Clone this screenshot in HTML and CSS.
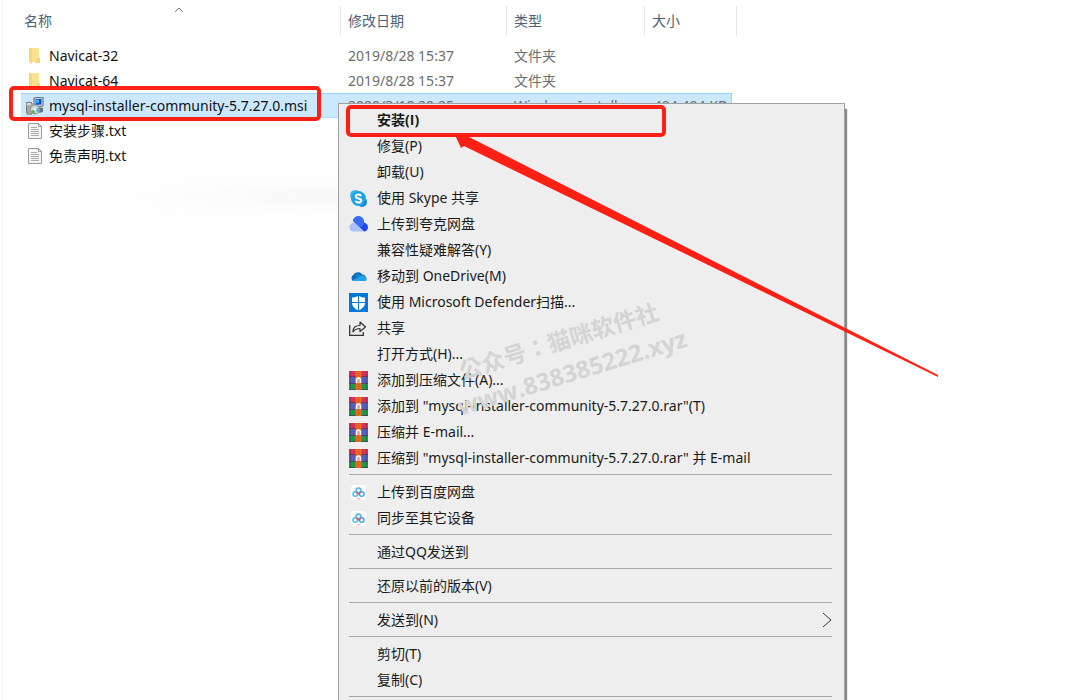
FILE: index.html
```html
<!DOCTYPE html>
<html lang="zh-CN">
<head>
    <meta charset="UTF-8">
    <meta name="viewport" content="width=device-width, initial-scale=1.0">
    <title>文件资源管理器</title>
    <link rel="stylesheet" href="styles.css">
</head>
<body>
    <!-- 图标 -->
    <svg class="symbols" aria-hidden="true">
        <symbol id="icon-folder" viewBox="0 0 16 18">
            <path d="M2 1h10v14H2z" fill="#fde49b"/>
            <path d="M2 1l3 1v15l-3-2z" fill="#f6d477"/>
            <path d="M5 2h7v13H5z" fill="#fce092"/>
            <path d="M10 11h3v5H8z" fill="#f6d477"/>
        </symbol>
        <symbol id="icon-text" viewBox="0 0 16 18">
            <path d="M1.500 1.500h10l3 3v12h-13z" fill="#f6f6f6" stroke="#9a9a9a"/>
            <path d="M11.500 1.500v3h3" fill="none" stroke="#9a9a9a"/>
            <path d="M4 5.500h6M4 7.500h8M4 9.500h8M4 11.500h8M4 13.500h8" stroke="#adadad"/>
        </symbol>
        <symbol id="icon-msi" viewBox="0 0 18 18">
            <path d="M0 6l3-1 3 1v11H1z" fill="#d9d9d2" stroke="#6d6d68"/>
            <path d="M2 8v8M4 8v8" stroke="#77776f"/>
            <path d="M8 1l9-1v9l-9 1z" fill="#d8dde4" stroke="#596473"/>
            <path d="M9.500 2.300l6-.6v5.800l-6 .5z" fill="#0a52ce"/>
            <path d="M10 3l3-.3v3l-3 .6z" fill="#35b7ef"/>
            <path d="M12 10l5 1v4l-4 1z" fill="#6e7378"/>
            <circle cx="9" cy="12.500" r="4.500" fill="#cdd9d5" stroke="#8a9694"/>
            <path d="M9 12.500L5 14a4.500 4.500 0 0 0 4 3z" fill="#53b866"/>
            <path d="M9 12.500l4-2a4.500 4.500 0 0 1-1 5z" fill="#5cabd8"/>
            <circle cx="9" cy="12.500" r="1.300" fill="#fff"/>
        </symbol>
        <symbol id="icon-skype" viewBox="0 0 19 19">
            <circle cx="6" cy="6" r="5" fill="#45b8ea"/>
            <circle cx="13" cy="13" r="5" fill="#1287d2"/>
            <circle cx="9.500" cy="9.500" r="7.500" fill="#20a3e3"/>
            <path d="M12.200 7c-.6-1.100-1.500-1.500-2.800-1.500-1.500 0-2.600.7-2.600 1.900 0 2.800 5.500 1.200 5.500 4 0 1.300-1.200 2.100-2.900 2.100-1.400 0-2.400-.6-2.900-1.700" fill="none" stroke="#fff" stroke-width="2"/>
        </symbol>
        <symbol id="icon-quark" viewBox="0 0 19 19">
            <path d="M4 6a5.500 5.500 0 0 1 11 1.500c2.500.5 4 2.500 4 4.800 0 2.500-1.800 4.200-4 4.200z" fill="#1d46f0"/>
            <path d="M4 6a5.500 5.500 0 0 1 11 1.500l-1 4-4 .5z" fill="#3a6cf6"/>
            <path d="M4.500 16.500a4.300 4.300 0 0 1-1-8.400c5-.6 6.500 6.400 11.500 8.400z" fill="#a9c0fc"/>
        </symbol>
        <symbol id="icon-onedrive" viewBox="0 0 19 19">
            <path d="M4 14a3.700 3.700 0 0 1 .5-6.300 5.500 5.500 0 0 1 9.500.6A3 3 0 0 1 15.500 14z" fill="#0f6cbf"/>
            <path d="M5 8l10 5.500 1-5a3 3 0 0 0-4-.3L8.500 7z" fill="#1686d6"/>
            <path d="M3 13.500l8-4c3-1 6 0 6.500 2s-.5 2.500-2 2.500h-11z" fill="#27a2e8"/>
        </symbol>
        <symbol id="icon-defender" viewBox="0 0 19 19">
            <path d="M0 0h19v19H0z" fill="#0078d7"/>
            <path d="M9.500 2.500c2 1.500 4 2 6.500 2v5c0 4-3 6.500-6.500 8C6 16 3 13.500 3 9.500v-5c2.500 0 4.500-.5 6.500-2z" fill="#fff"/>
            <path d="M9.500 2v16M3 9.500h13" stroke="#0078d7" stroke-width="1"/>
        </symbol>
        <symbol id="icon-share" viewBox="0 0 19 19">
            <path d="M.7 6v10.300h13.600V13" fill="none" stroke="#333" stroke-width="1.300"/>
            <path d="M4 13c0-4.500 2.500-6.500 7-6.500V3l5.500 5-5.500 4.500V9.500c-3 0-5 .5-7 3.500z" fill="none" stroke="#333" stroke-width="1.200" stroke-linejoin="round"/>
        </symbol>
        <symbol id="icon-rar" viewBox="0 0 19 19">
            <path d="M0 0h19v6H0z" fill="#d8305a"/>
            <path d="M0 6h19v7H0z" fill="#5a5cba"/>
            <path d="M0 13h19v6H0z" fill="#1b9a46"/>
            <path d="M0 5.500h19M0 12.500h19M0 18.500h19" stroke="#3a3555" stroke-opacity=".6"/>
            <path d="M1.500 0v19M17.500 0v19" stroke="#222" stroke-opacity=".25"/>
            <path d="M6.500 0h6v19h-6z" fill="#ec6a1e"/>
            <path d="M9.500 0v6M9.500 13v6" stroke="#c9552b" stroke-width="2" stroke-dasharray="1 1"/>
            <path d="M6 7h7v5H6z" fill="#e8503a"/>
            <path d="M7.500 12V9a2 2 0 0 1 4 0v3" fill="#e9a48f" stroke="#fff" stroke-width="1.300"/>
        </symbol>
        <symbol id="icon-baidu" viewBox="0 0 19 19">
            <rect x="2" y="2" width="15" height="15" rx="3" fill="#fdfdfd"/>
            <circle cx="9.500" cy="7.500" r="2.500" fill="none" stroke="#4cb4f5" stroke-width="1.500"/>
            <circle cx="6.300" cy="11" r="2.300" fill="none" stroke="#45c2f4" stroke-width="1.500"/>
            <circle cx="12.700" cy="11" r="2.300" fill="none" stroke="#38a8f5" stroke-width="1.500"/>
            <path d="M7.500 9l2 1.800L11.500 9" fill="none" stroke="#f04b6a" stroke-width="1.500"/>
            <path d="M7.500 15.800h4" stroke="#f3a3b0"/>
        </symbol>
    </svg>

    <main class="explorer">
        <table class="file-list">
            <colgroup>
                <col class="col-name">
                <col class="col-date">
                <col class="col-type">
                <col class="col-size">
            </colgroup>
            <thead>
                <tr>
                    <th aria-sort="ascending">
                        <button>名称</button>
                        <svg class="sort-arrow" viewBox="0 0 10 6" aria-hidden="true"><path d="M1 5l4-4 4 4"/></svg>
                    </th>
                    <th><button>修改日期</button></th>
                    <th><button>类型</button></th>
                    <th class="last"><button>大小</button></th>
                </tr>
            </thead>
            <tbody>
                <tr>
                    <td><span class="file"><svg><use href="#icon-folder"/></svg>Navicat-32</span></td>
                    <td>2019/8/28 15:37</td>
                    <td>文件夹</td>
                    <td></td>
                </tr>
                <tr>
                    <td><span class="file"><svg><use href="#icon-folder"/></svg>Navicat-64</span></td>
                    <td>2019/8/28 15:37</td>
                    <td>文件夹</td>
                    <td></td>
                </tr>
                <tr class="selected">
                    <td><span class="file"><svg><use href="#icon-msi"/></svg>mysql-installer-community-5.7.27.0.msi</span></td>
                    <td>2020/3/18 20:25</td>
                    <td>Windows Installer</td>
                    <td class="size">494,494 KB</td>
                </tr>
                <tr>
                    <td><span class="file"><svg><use href="#icon-text"/></svg>安装步骤.txt</span></td>
                    <td></td>
                    <td></td>
                    <td></td>
                </tr>
                <tr>
                    <td><span class="file"><svg><use href="#icon-text"/></svg>免责声明.txt</span></td>
                    <td></td>
                    <td></td>
                    <td></td>
                </tr>
            </tbody>
        </table>
        <div class="smudge"></div>
    </main>

    <!-- 右键菜单 -->
    <menu class="context-menu">
        <li><button class="default">安装(I)</button></li>
        <li><button>修复(P)</button></li>
        <li><button>卸载(U)</button></li>
        <li><button><svg><use href="#icon-skype"/></svg>使用 Skype 共享</button></li>
        <li><button><svg><use href="#icon-quark"/></svg>上传到夸克网盘</button></li>
        <li><button>兼容性疑难解答(Y)</button></li>
        <li><button><svg><use href="#icon-onedrive"/></svg>移动到 OneDrive(M)</button></li>
        <li><button><svg><use href="#icon-defender"/></svg>使用 Microsoft Defender扫描...</button></li>
        <li><button><svg><use href="#icon-share"/></svg>共享</button></li>
        <li><button>打开方式(H)...</button></li>
        <li><button><svg><use href="#icon-rar"/></svg>添加到压缩文件(A)...</button></li>
        <li><button><svg><use href="#icon-rar"/></svg>添加到 "mysql-installer-community-5.7.27.0.rar"(T)</button></li>
        <li><button><svg><use href="#icon-rar"/></svg>压缩并 E-mail...</button></li>
        <li><button><svg><use href="#icon-rar"/></svg>压缩到 "mysql-installer-community-5.7.27.0.rar" 并 E-mail</button></li>
        <li class="separator"></li>
        <li><button><svg><use href="#icon-baidu"/></svg>上传到百度网盘</button></li>
        <li><button><svg><use href="#icon-baidu"/></svg>同步至其它设备</button></li>
        <li class="separator"></li>
        <li><button>通过QQ发送到</button></li>
        <li class="separator"></li>
        <li><button>还原以前的版本(V)</button></li>
        <li class="separator"></li>
        <li><button>发送到(N)<svg class="submenu" viewBox="0 0 10 16"><path d="M1 1l8 7-8 7"/></svg></button></li>
        <li class="separator"></li>
        <li><button>剪切(T)</button></li>
        <li><button>复制(C)</button></li>
        <li class="separator"></li>
    </menu>

    <div class="watermark">
        <p class="account" lang="zh-TW">公众号：猫咪软件社</p>
        <p class="site">www.838385222.xyz</p>
    </div>

    <!-- 红色标注 -->
    <svg class="marks" width="1000" height="400" aria-hidden="true">
        <rect x="11" y="88" width="308" height="31" rx="3"/>
        <rect x="348" y="107" width="316" height="28" rx="3"/>
        <path d="M455 135L471 133L469 137L938 375L938 377L464 146L461 148Z"/>
    </svg>
</body>
</html>
```

FILE: styles.css
```css
:root {
    --text-color: #1a1a1a;
    --muted-color: #6d6d6d;
    --header-color: #4c607a;
    --line-color: #e5e5e5;
    --menu-color: #eeeeee;
    --mark-color: #ff2015;
}

* {
    box-sizing: border-box;
    margin: 0;
    padding: 0;
}

html, body {
    height: 100%;
    overflow: hidden;
}

body {
    position: relative;
    font-family: "Noto Sans", "Noto Sans CJK SC", sans-serif;
    font-size: 14px;
    line-height: 20px;
    color: var(--text-color);
    background-color: #fff;
}

button {
    font: inherit;
    color: inherit;
    background: none;
    border: none;
    text-align: left;
    white-space: nowrap;
}

.symbols {
    position: absolute;
    width: 0;
    height: 0;
}

/* 文件列表 */
.explorer {
    height: 100%;
    margin-left: 2px;
    padding: 6px 0 0 18px;
    border-left: 1px solid #f3f3f3;
}

.file-list {
    width: 711px;
    table-layout: fixed;
    border-collapse: separate;
    border-spacing: 0;
}

.col-name {
    width: 320px;
}

.col-date {
    width: 166px;
}

.col-type {
    width: 138px;
}

.col-size {
    width: 87px;
}

.file-list th {
    position: relative;
    padding-bottom: 7px;
    font-weight: normal;
}

.file-list th button {
    display: block;
    width: 100%;
    height: 30px;
    padding-left: 7px;
    color: var(--header-color);
    border-right: 1px solid var(--line-color);
}

.file-list th:first-child button {
    padding-left: 3px;
}

.file-list .last button {
    width: 92px;
}

.sort-arrow {
    position: absolute;
    top: 1px;
    left: 50%;
    width: 10px;
    height: 6px;
    margin-left: -7px;
    fill: none;
    stroke: #777;
}

.file-list td {
    height: 25px;
    padding-left: 7px;
    color: var(--muted-color);
    white-space: nowrap;
    overflow: hidden;
}

.file-list td:first-child {
    padding-left: 5px;
    color: #111;
}

.file {
    display: flex;
    align-items: center;
    gap: 5px;
}

.file svg {
    width: 18px;
    height: 18px;
}

.selected td {
    background-color: #cce8ff;
    border-top: 1px solid #99d1ff;
    border-bottom: 1px solid #b5dcfb;
}

.selected .size {
    padding-right: 4px;
    text-align: right;
    border-right: 1px solid #99d1ff;
}

.smudge {
    width: 317px;
    height: 48px;
    background: radial-gradient(ellipse at 100% 60%, #f7f7f7, #fdfdfd 40%, #fff 80%);
}

/* 右键菜单 */
.context-menu {
    position: absolute;
    top: 103px;
    left: 338px;
    width: 507px;
    padding: 3px 12px 12px 10px;
    list-style: none;
    background-color: var(--menu-color);
    border: 1px solid #a0a0a0;
    box-shadow: 2px 6px 1px #888;
}

.context-menu button {
    display: flex;
    align-items: center;
    position: relative;
    width: 100%;
    height: 26px;
    padding-left: 28px;
}

.context-menu button svg {
    position: absolute;
    left: 0;
    width: 19px;
    height: 19px;
}

.context-menu .default {
    font-family: "Open Sans", "Noto Sans CJK SC", sans-serif;
    font-weight: bold;
}

.context-menu button .submenu {
    left: auto;
    right: 0;
    width: 10px;
    height: 16px;
    fill: none;
    stroke: #333;
}

.separator {
    height: 1px;
    margin: 3px 0 4px;
    background-color: #a8a8a8;
}

/* 水印 */
.watermark {
    position: absolute;
    top: 322px;
    left: 448px;
    font-family: "Open Sans", "Noto Sans CJK TC", sans-serif;
    font-weight: bold;
    line-height: 34px;
    color: #d4d4d4;
    white-space: nowrap;
    transform: rotate(-17deg);
    pointer-events: none;
}

.account {
    padding-left: 12px;
    font-size: 23px;
}

.site {
    font-size: 24px;
}

.marks {
    position: absolute;
    top: 0;
    left: 0;
    pointer-events: none;
}

.marks rect {
    fill: none;
    stroke: var(--mark-color);
    stroke-width: 4;
}

.marks path {
    fill: var(--mark-color);
}
```
